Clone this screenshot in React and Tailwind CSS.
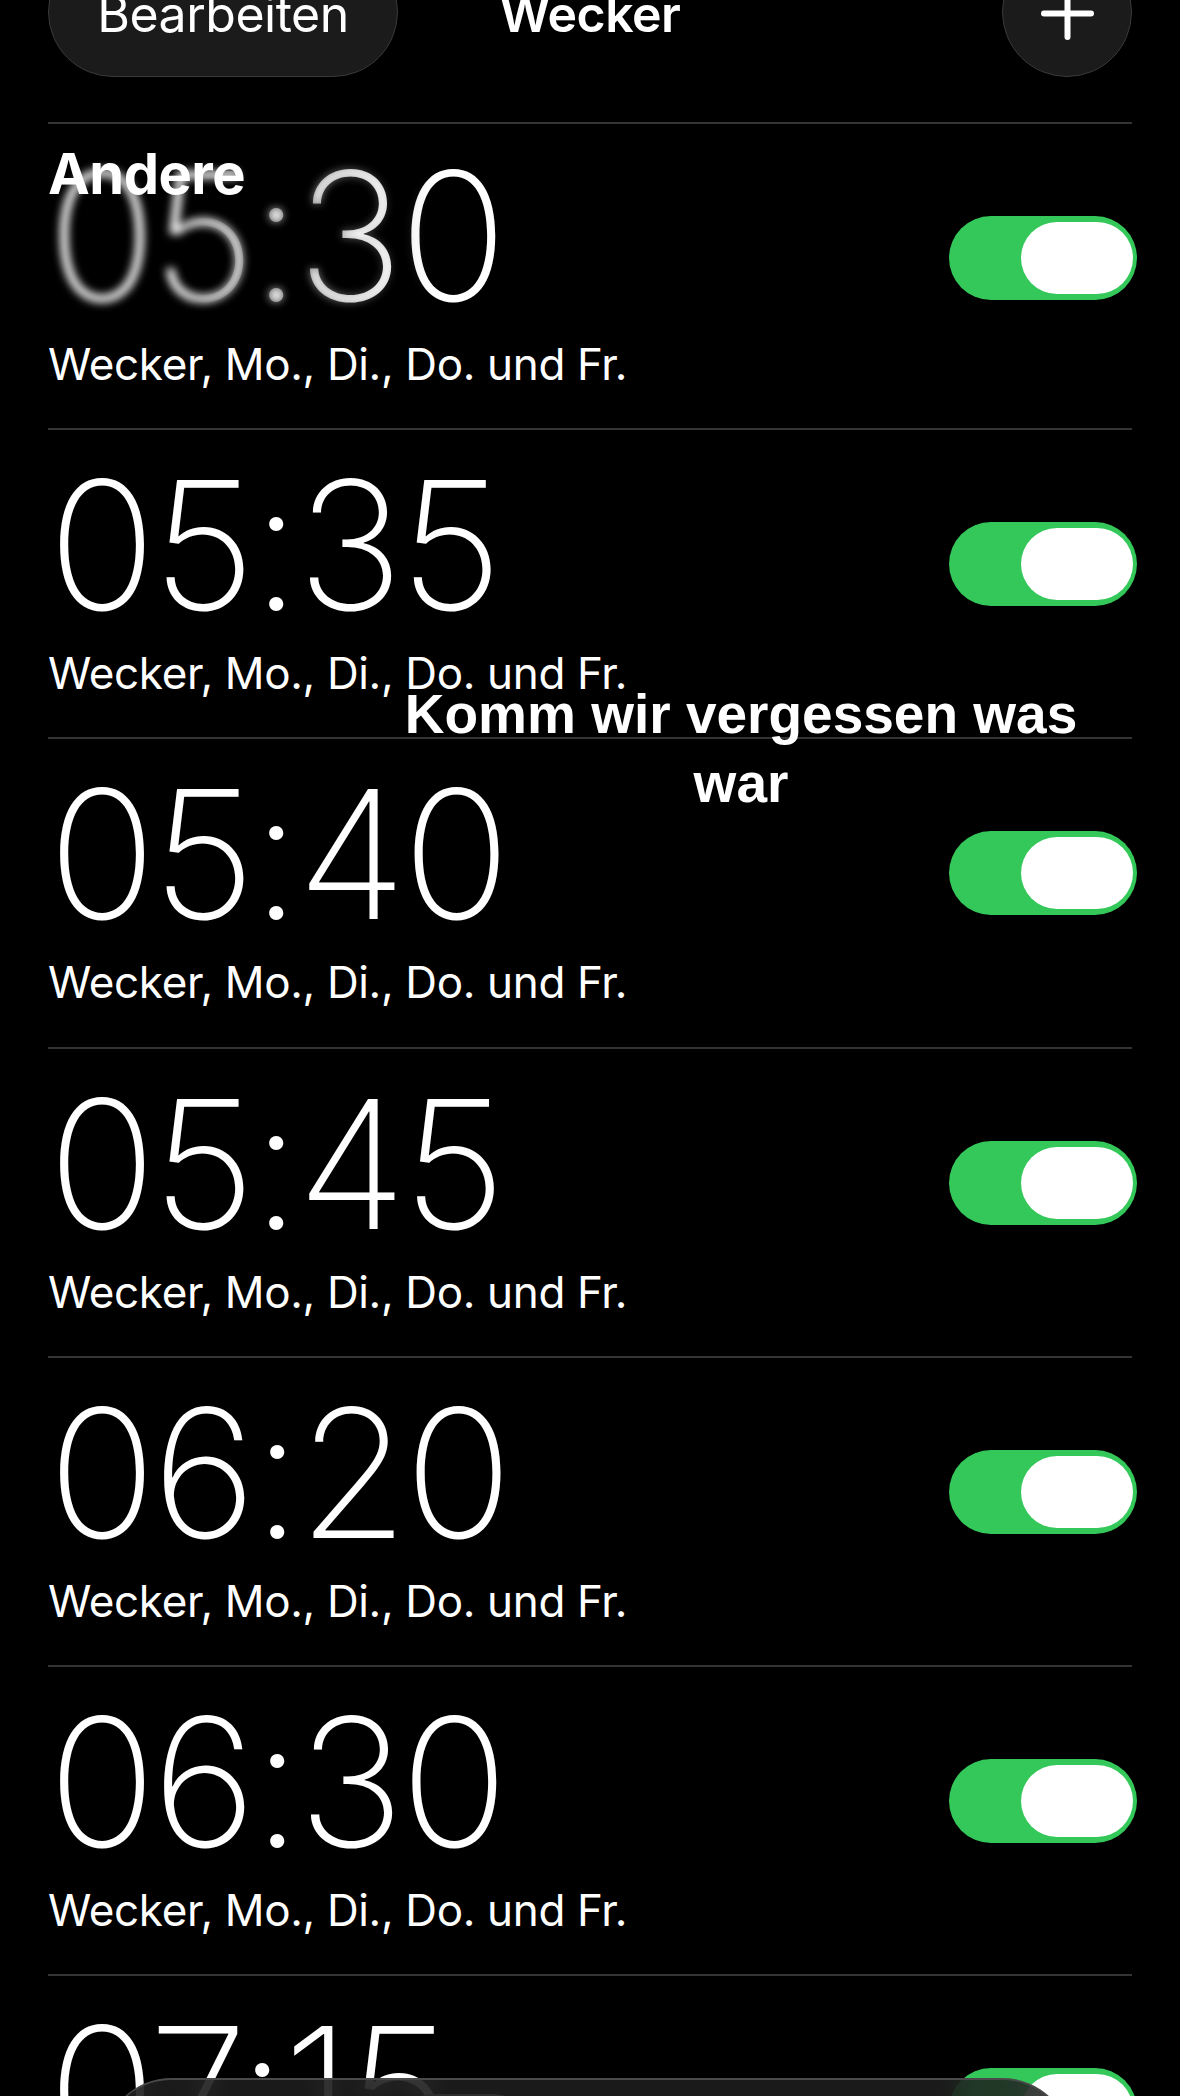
import React from 'react';

const alarms = ['05:30', '05:35', '05:40', '05:45', '06:20', '06:30', '07:15'];

function Toggle() {
    return (
        <div className="flex h-[84px] w-[188px] shrink-0 items-center justify-end rounded-full bg-[#34c759] pr-[4px]">
            <div className="h-[72px] w-[112px] rounded-full bg-white" />
        </div>
    );
}

function AlarmRow({ time, first }) {
    return (
        <div>
            <div className="mx-[48px] h-[2px] bg-[#343436]" />
            <div className={`flex items-start justify-between pl-[48px] pr-[43px] ${first ? 'h-[304px]' : 'h-[307.3px]'}`}>
                <div className={first ? 'pt-[23px]' : 'pt-[26px]'}>
                    <div className="text-[179px] font-extralight leading-none tracking-[-4px]">{time}</div>
                    <div className="mt-[16px] text-[44px] leading-none tracking-[-0.35px]">Wecker, Mo., Di., Do. und Fr.</div>
                </div>
                <div className="mt-[92px]">
                    <Toggle />
                </div>
            </div>
        </div>
    );
}

export default function App() {
    return (
        <div className="relative h-[2096px] w-full overflow-hidden bg-black font-['Inter',sans-serif] text-white">
            {/* nav bar */}
            <div className="-mt-[53px] grid h-[175px] grid-cols-[1fr_auto_1fr] items-start px-[48px]">
                <div className="flex justify-start">
                    <div className="flex h-[130px] w-[350px] items-center justify-center rounded-full border border-[#3a3a3a] bg-[#1b1b1b] pt-1 text-[50px] tracking-[-0.5px]">
                        Bearbeiten
                    </div>
                </div>
                <div className="flex h-[130px] items-center pt-1 text-[50px] font-semibold tracking-[-0.5px]">
                    Wecker
                </div>
                <div className="flex justify-end">
                    <div className="flex h-[130px] w-[130px] items-center justify-center rounded-full border border-[#3a3a3a] bg-[#1b1b1b]">
                        <svg width="53" height="53" viewBox="0 0 53 53" className="mt-[2px]">
                            <path d="M3 26.5H50M26.5 3V50" stroke="white" strokeWidth="6" strokeLinecap="round" fill="none" />
                        </svg>
                    </div>
                </div>
            </div>

            {/* alarms */}
            <div>
                {alarms.map((t, i) => (
                    <AlarmRow key={t} time={t} first={i === 0} />
                ))}
            </div>

            {/* scroll edge blur under the section header */}
            <div className="pointer-events-none absolute left-0 top-[124px] h-[190px] w-[640px] backdrop-blur-[4px] [mask-image:linear-gradient(to_right,black_30%,transparent_68%)]" />

            <div className="absolute left-[48px] top-[146px] text-[56px] font-bold leading-none tracking-[-0.5px]">
                Andere
            </div>

            {/* caption overlay */}
            <div className="absolute left-[381px] top-[680px] w-[720px] text-center font-['Liberation_Sans',Arial,sans-serif] text-[55px] font-bold leading-[69px]">
                Komm wir vergessen was war
            </div>

            {/* floating tab bar */}
            <div className="absolute left-[102px] top-[2078px] h-[140px] w-[970px] rounded-[70px] border-t-2 border-[#4a4a4a] bg-[#1f1f1f]/85 backdrop-blur-md">
                <div className="absolute left-[282px] top-[14px] h-[100px] w-[158px] rounded-full bg-[#2e2e2e]" />
            </div>
        </div>
    );
}
